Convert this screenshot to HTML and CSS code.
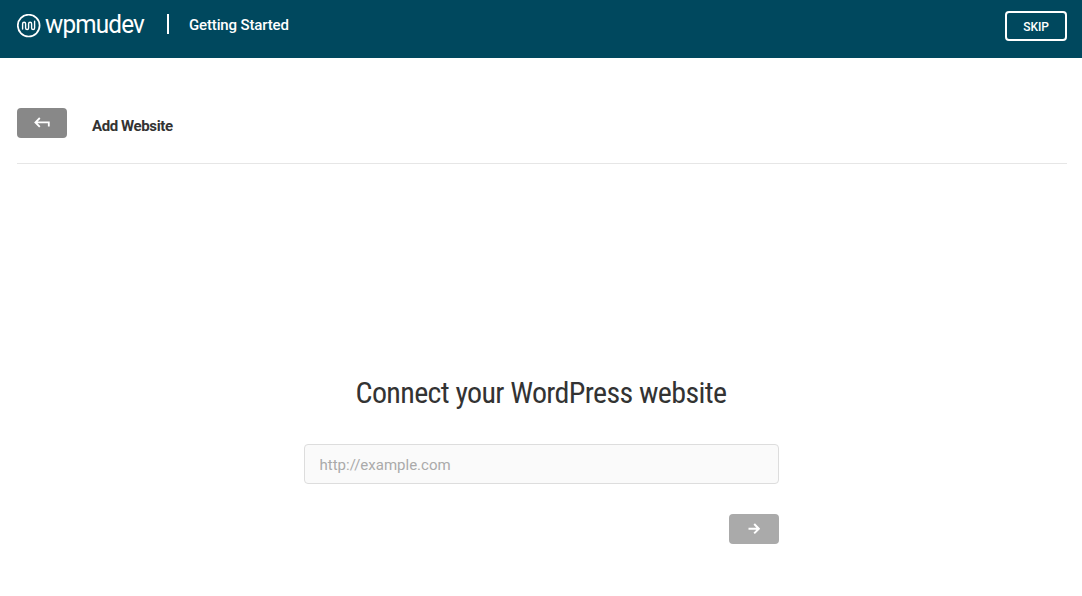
FILE: index.html
```html
<!DOCTYPE html>
<html lang="en">
<head>
  <meta charset="UTF-8" />
  <title>Getting Started</title>
  <link rel="stylesheet" href="styles.css">
</head>
<body>

  <!-- Header -->
  <header class="header">
    <a href="#" class="logo">
      <svg class="logo-icon" width="24" height="24" viewBox="0 0 24 24" fill="none" stroke="#fff" stroke-linecap="round">
        <circle cx="11.7" cy="11.6" r="10.9" stroke-width="1.7" />
        <path d="M5.6 15V9.8a1.5 1.5 0 0 1 3 0v4.3a1.5 1.5 0 0 0 3 0V9.8a1.5 1.5 0 0 1 3 0v4.3a1.5 1.5 0 0 0 3 0V7.2" stroke-width="1.4" />
      </svg>
      <span class="logo-text">wpmudev</span>
    </a>
    <span class="divider"></span>
    <span class="header-title">Getting Started</span>
    <button class="skip-btn">SKIP</button>
  </header>

  <!-- Page title -->
  <div class="title-bar">
    <button class="icon-btn back-btn" aria-label="Back">
      <svg width="16" height="12" viewBox="0 0 16 12" fill="none" stroke="#fff" stroke-width="1.8">
        <path d="M5.8 1L1.4 5.4L5.8 9.8M1.6 5.4H14.8V9.4" />
      </svg>
    </button>
    <h1>Add Website</h1>
  </div>

  <!-- Connect form -->
  <main class="connect">
    <h2>Connect your WordPress website</h2>
    <form class="connect-form">
      <input type="text" placeholder="http://example.com" />
      <button type="button" class="icon-btn next-btn" aria-label="Next">
        <svg width="12" height="12" viewBox="0 0 12 12" fill="none" stroke="#fff" stroke-width="2">
          <path d="M0.5 5.7H10.5M6.2 1L10.8 5.7L6.2 10.4" />
        </svg>
      </button>
    </form>
  </main>

</body>
</html>
```
FILE: styles.css
```css
* {
  box-sizing: border-box;
  margin: 0;
  padding: 0;
}

body {
  font-family: Roboto, sans-serif;
  background: #fff;
  color: #333;
}

/* Header */
.header {
  display: flex;
  align-items: flex-start;
  height: 58px;
  padding: 11px 15px 0 17px;
  background: #00485e;
  color: #fff;
}

.logo {
  display: flex;
  width: 150px;
  color: #fff;
  text-decoration: none;
}

.logo-icon {
  margin-top: 3px;
  flex-shrink: 0;
}

.logo-text {
  margin-left: 4px;
  font-size: 26px;
  line-height: 26px;
  letter-spacing: -0.9px;
  transform: scaleX(0.935);
  transform-origin: left;
}

.divider {
  width: 2px;
  height: 20px;
  margin-top: 3px;
  background: #fff;
}

.header-title {
  margin-left: 20px;
  font-size: 15px;
  font-weight: 500;
  line-height: 28px;
  letter-spacing: -0.15px;
}

.skip-btn {
  width: 62px;
  height: 30px;
  margin-left: auto;
  padding-top: 1px;
  border: 2px solid #fff;
  border-radius: 4px;
  background: transparent;
  color: #fff;
  font-family: inherit;
  font-size: 12px;
  font-weight: 500;
  letter-spacing: -0.1px;
  cursor: pointer;
}

/* Title bar */
.title-bar {
  display: flex;
  align-items: flex-start;
  height: 106px;
  margin: 0 15px 0 17px;
  padding-top: 50px;
  border-bottom: 1px solid #e6e6e6;
}

.title-bar h1 {
  margin-left: 25px;
  font-size: 15px;
  font-weight: 700;
  line-height: 36px;
  letter-spacing: -0.4px;
}

.icon-btn {
  display: flex;
  align-items: center;
  justify-content: center;
  width: 50px;
  height: 30px;
  border: none;
  border-radius: 4px;
  cursor: pointer;
}

.back-btn {
  background: #888;
}

.next-btn {
  margin-top: 30px;
  background: #aaa;
}

/* Connect form */
.connect {
  width: 475px;
  margin: 209px auto 0;
}

.connect h2 {
  font-family: "Roboto Condensed", Roboto, sans-serif;
  font-stretch: 75%;
  font-size: 30px;
  font-weight: 400;
  line-height: 40px;
  letter-spacing: -0.62px;
  text-align: center;
  white-space: nowrap;
}

.connect-form {
  display: flex;
  flex-direction: column;
  align-items: flex-end;
  margin-top: 31px;
}

.connect-form input {
  width: 100%;
  height: 40px;
  padding: 1px 15px 0;
  border: 1px solid #ddd;
  border-radius: 4px;
  background: #fafafa;
  font-family: inherit;
  font-size: 15px;
  outline: none;
}

.connect-form input::placeholder {
  color: #aaa;
}
```
